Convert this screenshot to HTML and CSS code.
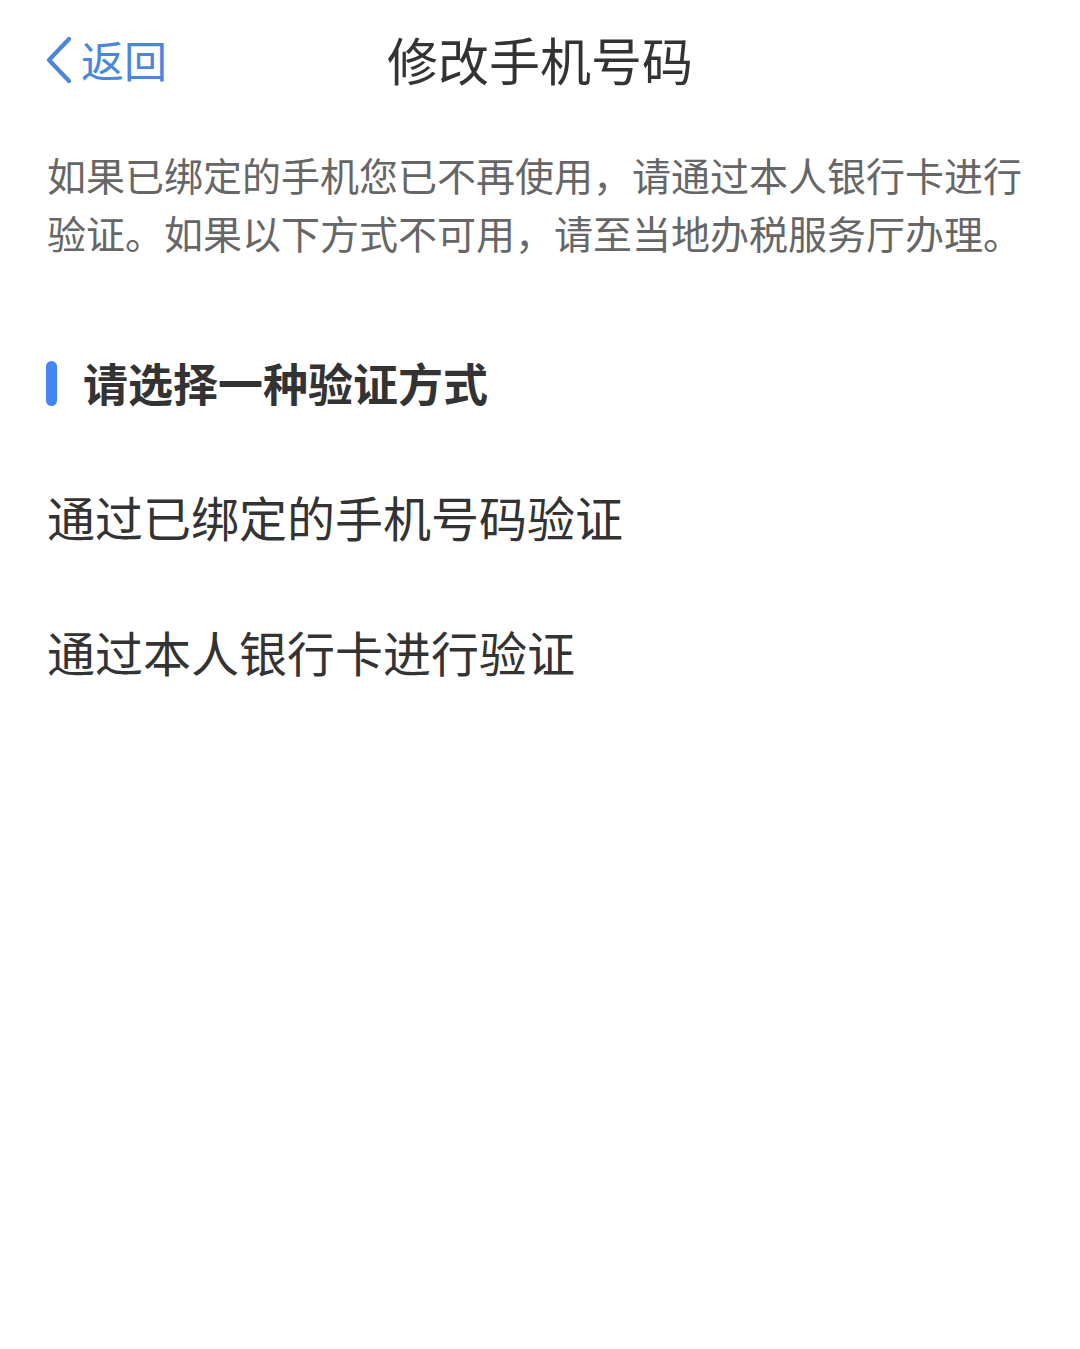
FILE: index.html
```html
<!DOCTYPE html>
<html lang="zh-CN">
<head>
<meta charset="utf-8">
<link rel="stylesheet" href="styles.css">
</head>
<body>
<div class="page">
  <header class="nav">
    <div class="back">
      <svg class="chev" width="28" height="48" viewBox="0 0 28 48"><path d="M25 3 L5 24 L25 45" fill="none" stroke="#4a86e0" stroke-width="4.2" stroke-linecap="round" stroke-linejoin="round"/></svg>
      <span class="back-text">返回</span>
    </div>
    <h1 class="title">修改手机号码</h1>
    <div class="spacer"></div>
  </header>
  <p class="intro">如果已绑定的手机您已不再使用，请通过本人银行卡进行验证。如果以下方式不可用，请至当地办税服务厅办理。</p>
  <h2 class="section-title"><span class="bar"></span>请选择一种验证方式</h2>
  <ul class="options">
    <li class="option">通过已绑定的手机号码验证</li>
    <li class="option">通过本人银行卡进行验证</li>
  </ul>
</div>
</body>
</html>
```
FILE: styles.css
```css
html, body {
  margin: 0;
  padding: 0;
  background: #ffffff;
}
body {
  font-family: "Noto Sans CJK SC", "Noto Sans", sans-serif;
  color: #333333;
}
.page {
  width: 1080px;
}
.nav {
  height: 117px;
  display: grid;
  grid-template-columns: 1fr auto 1fr;
  align-items: center;
  padding: 0 44px;
  box-sizing: border-box;
}
.back {
  display: flex;
  align-items: center;
  gap: 9px;
  color: #4a86e0;
}
.chev {
  display: block;
  margin-top: 3px;
}
.back-text {
  font-size: 43px;
  line-height: 60px;
}
.title {
  margin: 0;
  font-size: 51px;
  font-weight: 400;
  line-height: 70px;
  color: #333333;
}
.intro {
  margin: 28px 0 0;
  padding: 0 47px;
  font-size: 39px;
  line-height: 58px;
  color: #666666;
}
.section-title {
  margin: 92px 0 0;
  padding: 0 46px;
  display: flex;
  align-items: center;
  gap: 26px;
  font-size: 45px;
  line-height: 60px;
  font-weight: 700;
  color: #333333;
}
.bar {
  width: 11px;
  height: 45px;
  border-radius: 6px;
  background: #4386f5;
}
.options {
  list-style: none;
  margin: 36px 0 0;
  padding: 0 47px;
}
.option {
  font-size: 48px;
  line-height: 135px;
  color: #333333;
}
```
